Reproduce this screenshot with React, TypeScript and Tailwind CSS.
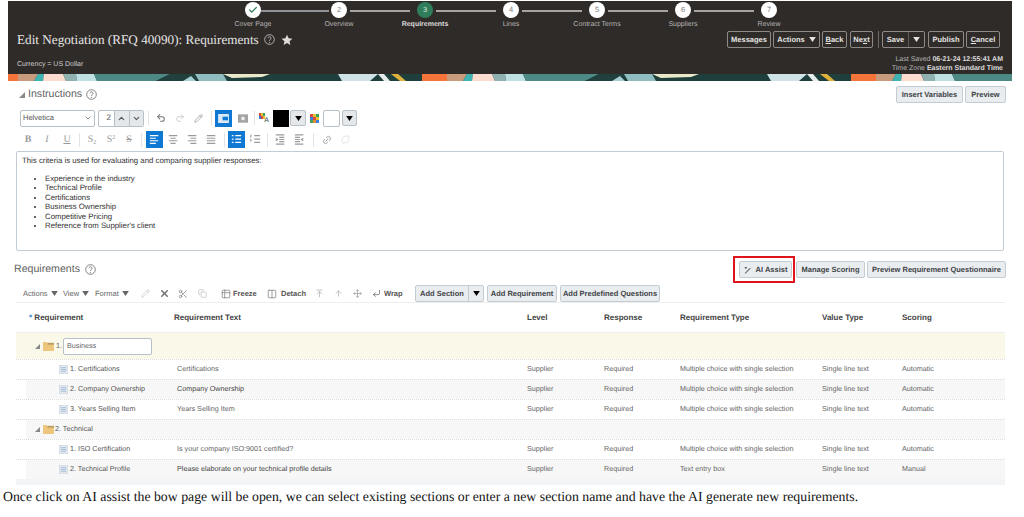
import { Check, ChevronUp, ChevronDown, Undo2, Redo2, Pencil, Link2, Unlink, X, Scissors, Copy, Table2, Columns2, ArrowUpToLine, ArrowUp, Move, CornerDownLeft } from 'lucide-react';

const steps = [
  { label: 'Cover Page', mark: 'check' },
  { label: 'Overview', mark: '2' },
  { label: 'Requirements', mark: '3', current: true },
  { label: 'Lines', mark: '4' },
  { label: 'Contract Terms', mark: '5' },
  { label: 'Suppliers', mark: '6' },
  { label: 'Review', mark: '7' },
];

const rows = [
  { name: '1. Certifications', text: 'Certifications', level: 'Supplier', response: 'Required', type: 'Multiple choice with single selection', value: 'Single line text', scoring: 'Automatic' },
  { name: '2. Company Ownership', text: 'Company Ownership', level: 'Supplier', response: 'Required', type: 'Multiple choice with single selection', value: 'Single line text', scoring: 'Automatic', alt: true },
  { name: '3. Years Selling Item', text: 'Years Selling Item', level: 'Supplier', response: 'Required', type: 'Multiple choice with single selection', value: 'Single line text', scoring: 'Automatic' },
  { section: '2. Technical', alt: true },
  { name: '1. ISO Certification', text: 'Is your company ISO:9001 certified?', level: 'Supplier', response: 'Required', type: 'Multiple choice with single selection', value: 'Single line text', scoring: 'Automatic' },
  { name: '2. Technical Profile', text: 'Please elaborate on your technical profile details', level: 'Supplier', response: 'Required', type: 'Text entry box', value: 'Single line text', scoring: 'Manual', alt: true },
];

const criteria = ['Experience in the industry', 'Technical Profile', 'Certifications', 'Business Ownership', 'Competitive Pricing', "Reference from Supplier's client"];

function Caret({ className = '' }: { className?: string }) {
  return (
    <svg viewBox="0 0 8 6" className={`w-[7px] h-[5px] shrink-0 ${className}`}>
      <path d="M0 0h8L4 6z" fill="currentColor" />
    </svg>
  );
}

function Help({ size = 11 }: { size?: number }) {
  return (
    <svg viewBox="0 0 16 16" width={size} height={size} className="shrink-0">
      <circle cx="8" cy="8" r="7" fill="none" stroke="currentColor" strokeWidth="1.2" />
      <path d="M5.800 6.200a2.200 2.200 0 1 1 3.400 1.900c-.8.500-1.200.9-1.200 1.900" fill="none" stroke="currentColor" strokeWidth="1.200" />
      <circle cx="8" cy="12" r=".9" fill="currentColor" />
    </svg>
  );
}

function Folder() {
  return (
    <svg viewBox="0 0 12 11" className="w-[11px] h-[10px] shrink-0">
      <path d="M0 1h4l1 1.500h7V11H0z" fill="#edc67c" />
      <path d="M5 2h7v2H5z" fill="#b99a63" />
    </svg>
  );
}

function DocIcon() {
  return (
    <svg viewBox="0 0 10 10" className="w-[9px] h-[9px] shrink-0">
      <rect width="10" height="10" fill="#e3e8ee" stroke="#bcc6d0" strokeWidth=".6" />
      <path d="M2 3h6M2 5h6M2 7h6" stroke="#8fb0d4" strokeWidth=".8" />
    </svg>
  );
}

function DarkButton({ children, className = '' }: { children: React.ReactNode; className?: string }) {
  return (
    <div className={`h-[17px] flex items-center justify-center whitespace-nowrap rounded-[2px] border border-[#8d8a87] text-[7.5px] font-bold text-[#e4e3e2] ${className}`}>
      {children}
    </div>
  );
}

function LightButton({ children, className = '' }: { children: React.ReactNode; className?: string }) {
  return (
    <div className={`h-[17px] flex items-center justify-center whitespace-nowrap rounded-[2px] border border-[#c4ccd3] bg-[#e9edf0] text-[7.5px] font-bold text-[#3f4347] ${className}`}>
      {children}
    </div>
  );
}

function ToolSquare({ active, children }: { active?: boolean; children?: React.ReactNode }) {
  return (
    <div className={`w-[17px] h-[17px] flex items-center justify-center shrink-0 ${active ? 'bg-[#0f78d2] text-white' : 'text-[#9a9a9a]'}`}>
      {children}
    </div>
  );
}

function Sep({ className = '' }: { className?: string }) {
  return <div className={`w-px h-[14px] bg-[#e3e3e3] shrink-0 ${className}`} />;
}

function Lines({ kind }: { kind: 'left' | 'center' | 'right' | 'full' | 'list' | 'num' | 'in' | 'out' }) {
  const d: Record<string, string> = {
    left: 'M1 2h10M1 5h7M1 8h10M1 11h7',
    center: 'M1 2h10M3 5h6M1 8h10M3 11h6',
    right: 'M1 2h10M4 5h7M1 8h10M4 11h7',
    full: 'M1 2h10M1 5h10M1 8h10M1 11h10',
    list: 'M1 2h2M5 2h7M1 6h2M5 6h7M1 10h2M5 10h7',
    num: 'M1 1v3M1 6v3M5 2h7M5 6h7M5 10h7',
    in: 'M1 1h10M1 12h10M5 4h6M5 6.500h6M5 9h6M1 5l2 1.500L1 8',
    out: 'M1 1h10M1 12h10M1 4h6M1 6.500h6M1 9h6M11 5L9 6.500l2 1.500',
  };
  return (
    <svg viewBox="0 0 13 13" className="w-[11px] h-[11px]">
      <path d={d[kind]} stroke="currentColor" strokeWidth="1.4" fill="none" />
    </svg>
  );
}

// one repeat of the artwork strip is 429px wide
function Banner() {
  const tile = (x: number) => (
    <g key={x} transform={`translate(${x} 0)`}>
      <rect width="429" height="7" fill="#1f3f3d" />
      <path d="M0 0h25v7H0z" fill="#f5743a" />
      <path d="M25 0h20l-4 7H25z" fill="#c99b7d" />
      <path d="M45 0h6l-1 7h-9z" fill="#3fb3b1" />
      <path d="M51 0h19l3 7H50z" fill="#fbdccf" />
      <path d="M70 0h13l1 7H73z" fill="#8fb2b1" />
      <path d="M83 0h18l3 7H84z" fill="#bfe0e3" />
      <path d="M101 0h76l-14 7h-59z" fill="#4d8a86" />
      <path d="M177 0h25l-6 7h-33z" fill="#213f3d" />
      <path d="M190 7l8-5 5 5z" fill="#a7d0d4" />
      <path d="M202 0h28l4 7h-28z" fill="#8fbcbf" />
      <path d="M230 0h47l-8 3-30 1z" fill="#e9e8c8" />
      <path d="M345 0h40l-8 7h-28z" fill="#cfe3e6" />
      <path d="M398 0h7l8 7h-6z" fill="#e0b13c" />
      <path d="M385 0h6l6 7h-6z" fill="#e7ecec" />
    </g>
  );
  return (
    <svg viewBox="0 0 1004 7" preserveAspectRatio="none" className="block w-full h-[7px]">
      {[-15, 414, 843].map(tile)}
    </svg>
  );
}

const cols = 'grid grid-cols-[10px_148px_353px_77px_76px_142px_80px_1fr] items-center';

export default function App() {
  return (
    <div className="w-[1024px] h-[517px] overflow-hidden bg-white opacity-[0.999] font-['Liberation_Sans',Arial,sans-serif] text-[#4a4a4a] antialiased [text-rendering:geometricPrecision]">
      <div className="pt-px pl-2 pr-3">
        <div className="h-[73px] bg-[#2f2b29] text-[#dcdbda]">
          <div className="flex pl-[202px] h-[30px]">
            {steps.map((s, i) => (
              <div key={s.label} className="relative w-[86px] h-[30px] flex flex-col items-center pt-px">
                {i < steps.length - 1 && (
                  <div className={`absolute top-[9px] h-[1.5px] ${i === 0 ? 'left-[51px] w-[68px] bg-[#8f9296]' : 'left-[54px] w-[60px] bg-[#a5a4a3]'}`} />
                )}
                <div className={`w-[16px] h-[16px] rounded-full flex items-center justify-center text-[7.5px] ${s.current ? 'bg-[#2f7d5b] text-[#cfe3d8]' : 'bg-white text-[#7a7a7a]'}`}>
                  {s.mark === 'check' ? <Check size={10} strokeWidth={3} className="text-[#2f7d5b]" /> : s.mark}
                </div>
                <div className={`mt-[2px] text-[7px] leading-[10px] whitespace-nowrap ${s.current ? 'font-bold text-[#dedddc]' : 'text-[#b5b4b3]'}`}>{s.label}</div>
              </div>
            ))}
          </div>
          <div className="flex items-center h-[17px] pl-[9px] pr-[12px]">
            <h1 className="font-['Liberation_Serif',serif] text-[13.2px] text-[#e6e5e4] whitespace-nowrap">Edit Negotiation (RFQ 40090): Requirements</h1>
            <div className="ml-[5px] text-[#c9c8c7]"><Help /></div>
            <svg viewBox="0 0 24 24" className="ml-[6px] w-[12px] h-[12px]"><path d="M12 1.500l3.200 7 7.600.8-5.700 5.100 1.600 7.500L12 18l-6.700 3.900 1.600-7.500L1.200 9.300l7.600-.8z" fill="#dcdbda" /></svg>
            <div className="ml-auto flex items-center">
              <DarkButton className="w-[44px]">Messages</DarkButton>
              <DarkButton className="w-[47px] ml-[2px] gap-[4px]">Actions <Caret /></DarkButton>
              <DarkButton className="w-[25px] ml-[2px]"><span><u>B</u>ack</span></DarkButton>
              <DarkButton className="w-[23px] ml-[3px]"><span>Ne<u>x</u>t</span></DarkButton>
              <div className="w-px h-[17px] bg-[#6d6a68] ml-[5px] mr-[3px]" />
              <DarkButton className="w-[43px]">
                <span className="flex-1 text-center">Save</span>
                <span className="h-full w-[16px] border-l border-[#5f5c5a] flex items-center justify-center"><Caret /></span>
              </DarkButton>
              <DarkButton className="w-[36px] ml-[3px]">Publish</DarkButton>
              <DarkButton className="w-[34px] ml-[2px]"><span><u>C</u>ancel</span></DarkButton>
            </div>
          </div>
          <div className="flex items-start justify-between pl-[9px] pr-[9px] mt-[7px]">
            <div className="text-[7px] leading-[10px] mt-[5px] text-[#cfcecd]">Currency = US Dollar</div>
            <div className="text-[7px] leading-[9px] text-right text-[#b5b4b3]">
              <div>Last Saved <b className="text-[#dedddc]">06-21-24 12:55:41 AM</b></div>
              <div>Time Zone <b className="text-[#dedddc]">Eastern Standard Time</b></div>
            </div>
          </div>
        </div>
        <Banner />
      </div>

      <div className="flex items-center h-[19px] mt-[4px] pl-[19px] pr-[18px]">
        <svg viewBox="0 0 6 6" className="w-[6px] h-[6px] text-[#8a8a8a]"><path d="M6 0v6H0z" fill="currentColor" /></svg>
        <h2 className="ml-[3px] text-[10.6px] text-[#5f5f5f]">Instructions</h2>
        <div className="ml-[4px] text-[#6b6b6b]"><Help /></div>
        <div className="ml-auto flex gap-[2px]">
          <LightButton className="w-[67px]">Insert Variables</LightButton>
          <LightButton className="w-[41px]">Preview</LightButton>
        </div>
      </div>

      <div className="flex items-center h-[18px] mt-[5px] pl-[20px] text-[#8a8a8a]">
        <div className="w-[75px] h-[17px] border border-[#b8c0c7] rounded-[2px] flex items-center justify-between px-[2px] text-[7.5px] text-[#555]">
          Helvetica <ChevronDown size={8} />
        </div>
        <div className="ml-[3px] h-[17px] w-[46px] flex items-center border border-[#b8c0c7] rounded-[2px] text-[8px] text-[#555]">
          <span className="w-[15px] text-right pr-[3px]">2</span>
          <span className="flex-1 h-full bg-[#e4e8eb] border-l border-[#b8c0c7] flex items-center justify-center"><ChevronUp size={9} strokeWidth={3} /></span>
          <span className="flex-1 h-full bg-[#e4e8eb] border-l border-[#b8c0c7] flex items-center justify-center"><ChevronDown size={9} strokeWidth={3} /></span>
        </div>
        <Sep className="ml-[4px]" />
        <div className="ml-[3px] flex gap-[2px]">
          <ToolSquare><Undo2 size={10} strokeWidth={2.5} className="text-[#777]" /></ToolSquare>
          <ToolSquare><Redo2 size={10} className="text-[#c5c5c5]" /></ToolSquare>
          <ToolSquare><Pencil size={9} /></ToolSquare>
        </div>
        <Sep className="ml-[4px]" />
        <div className="ml-[3px] flex gap-[2px]">
          <ToolSquare active>
            <svg viewBox="0 0 12 10" className="w-[11px] h-[9px]"><path d="M0 0h12v10H0z" fill="#dbe9f6" /><path d="M5 3h6v4H5z" fill="#0f78d2" /></svg>
          </ToolSquare>
          <ToolSquare>
            <svg viewBox="0 0 12 10" className="w-[10px] h-[9px]"><path d="M0 0h12v10H0z" fill="#a3a3a3" /><path d="M4 3h4v4H4z" fill="#eee" /></svg>
          </ToolSquare>
        </div>
        <Sep className="ml-[3px]" />
        <div className="ml-[4px] w-[10px] h-[11px] relative">
          <div className="grid grid-cols-3 w-[6px] h-[6px]">
            <span className="bg-[#d84a3a]" /><span className="bg-[#e8c23a]" /><span className="bg-[#3aa655]" />
            <span className="bg-[#3a7fd8]" /><span className="bg-[#d84a3a]" /><span className="bg-[#e8c23a]" />
          </div>
          <span className="absolute right-0 bottom-0 text-[7px] leading-[7px] font-bold text-[#6d7b7c]">A</span>
        </div>
        <div className="ml-[4px] w-[16px] h-[17px] bg-black" />
        <div className="w-[16px] h-[16px] ml-px border border-[#b8c0c7] bg-[#e4e8eb] rounded-[2px] flex items-center justify-center text-black"><Caret /></div>
        <div className="ml-[4px] w-[9px] h-[9px] grid grid-cols-3">
          <span className="bg-[#d84a3a]" /><span className="bg-[#e8c23a]" /><span className="bg-[#3aa655]" />
          <span className="bg-[#3a7fd8]" /><span className="bg-[#d84a3a]" /><span className="bg-[#e8c23a]" />
          <span className="bg-[#3aa655]" /><span className="bg-[#e8893a]" /><span className="bg-[#3a7fd8]" />
        </div>
        <div className="ml-[4px] w-[17px] h-[17px] bg-white border border-[#b8c0c7] rounded-[2px]" />
        <div className="w-[15px] h-[16px] ml-[2px] border border-[#b8c0c7] bg-[#e4e8eb] rounded-[2px] flex items-center justify-center text-black"><Caret /></div>
      </div>

      <div className="flex items-center h-[17px] mt-[4px] pl-[20px] text-[#9a9a9a]">
        <span className="w-[16px] text-center font-['Liberation_Serif',serif] font-bold text-[10px]">B</span>
        <span className="w-[22px] text-center font-['Liberation_Serif',serif] italic text-[10px]">I</span>
        <span className="w-[18px] text-center font-['Liberation_Serif',serif] underline text-[10px]">U</span>
        <Sep className="ml-[3px]" />
        <span className="ml-[2px] w-[20px] text-center font-['Liberation_Serif',serif] text-[10px]">S<sub className="text-[6px]">2</sub></span>
        <span className="w-[18px] text-center font-['Liberation_Serif',serif] text-[10px]">S<sup className="text-[6px]">2</sup></span>
        <span className="w-[18px] text-center font-['Liberation_Serif',serif] line-through text-[10px]">S</span>
        <Sep className="ml-[3px]" />
        <div className="ml-[4px] flex gap-[2px]">
          <ToolSquare active><Lines kind="left" /></ToolSquare>
          <ToolSquare><Lines kind="center" /></ToolSquare>
          <ToolSquare><Lines kind="right" /></ToolSquare>
          <ToolSquare><Lines kind="full" /></ToolSquare>
        </div>
        <Sep className="ml-[4px]" />
        <div className="ml-[3px] flex gap-[2px]">
          <ToolSquare active><Lines kind="list" /></ToolSquare>
          <ToolSquare><Lines kind="num" /></ToolSquare>
        </div>
        <Sep className="ml-[3px]" />
        <div className="ml-[4px] flex gap-[2px]">
          <ToolSquare><Lines kind="in" /></ToolSquare>
          <ToolSquare><Lines kind="out" /></ToolSquare>
        </div>
        <Sep className="ml-[5px]" />
        <div className="ml-[4px] flex gap-[2px]">
          <ToolSquare><Link2 size={10} className="-rotate-45" /></ToolSquare>
          <ToolSquare><Unlink size={9} className="text-[#d5d5d5]" /></ToolSquare>
        </div>
      </div>

      <div className="ml-[16px] mr-[20px] mt-[3px] h-[100px] border border-[#c4ccd3] rounded-[2px] px-[5px] pt-[4px] text-[7.8px] leading-[9.5px] text-[#333]">
        <p className="mb-[8px]">This criteria is used for evaluating and comparing supplier responses:</p>
        <ul className="pl-[23px] list-disc">
          {criteria.map(c => <li key={c}>{c}</li>)}
        </ul>
      </div>

      <div className="flex items-center h-[19px] mt-[9px] pl-[14px] pr-[18px]">
        <h2 className="text-[10.6px] text-[#5f5f5f]">Requirements</h2>
        <div className="ml-[5px] text-[#6b6b6b]"><Help /></div>
        <div className="ml-auto flex items-center gap-[2px]">
          <div className="relative mr-[2px]">
            <LightButton className="w-[53px] gap-[3px]">
              <svg viewBox="0 0 12 10" className="w-[9px] h-[8px] text-[#666]"><path d="M1 9l7-7 1 1-7 7zM9 1l2-1M1 1h3v2H1z" fill="currentColor" /></svg>
              AI Assist
            </LightButton>
            <div className="absolute -left-[6px] -top-[5px] w-[62px] h-[27px] border-[2px] border-[#e0141c]" />
          </div>
          <LightButton className="w-[69px]">Manage Scoring</LightButton>
          <LightButton className="w-[139px]">Preview Requirement Questionnaire</LightButton>
        </div>
      </div>

      <div className="flex items-center h-[17px] mt-[6px] pl-[23px] text-[7.5px] text-[#666]">
        <span className="flex items-center gap-[3px] w-[34px]">Actions <Caret /></span>
        <span className="flex items-center gap-[3px] ml-[6px] w-[26px]">View <Caret /></span>
        <span className="flex items-center gap-[3px] ml-[6px] w-[35px]">Format <Caret /></span>
        <Pencil size={9} className="ml-[11px] text-[#c8c8c8]" />
        <X size={11} strokeWidth={3.5} className="ml-[9px] text-[#777]" />
        <Scissors size={10} className="ml-[8px] text-[#8a8a8a]" />
        <Copy size={9} className="ml-[10px] text-[#c0c0c0]" />
        <Table2 size={10} className="ml-[14px] text-[#8a8a8a]" />
        <b className="ml-[2px] w-[24px] text-[#555]">Freeze</b>
        <Columns2 size={10} className="ml-[10px] text-[#8a8a8a]" />
        <b className="ml-[4px] w-[24px] text-[#555]">Detach</b>
        <ArrowUpToLine size={9} className="ml-[10px] text-[#b0b0b0]" />
        <ArrowUp size={9} className="ml-[10px] text-[#b0b0b0]" />
        <Move size={9} className="ml-[10px] text-[#a0a0a0]" />
        <CornerDownLeft size={9} className="ml-[10px] text-[#666]" />
        <b className="ml-[3px] w-[20px] text-[#555]">Wrap</b>
        <div className="ml-[11px] flex gap-[3px] items-center">
          <LightButton className="w-[69px]">
            <span className="flex-1 text-center">Add Section</span>
            <span className="h-full w-[15px] border-l border-[#c4ccd3] flex items-center justify-center text-black"><Caret /></span>
          </LightButton>
          <LightButton className="w-[70px]">Add Requirement</LightButton>
          <LightButton className="w-[100px]">Add Predefined Questions</LightButton>
        </div>
      </div>

      <div className="ml-[16px] mr-[19px] border-t border-[#eee] text-[7.2px]">
        <div className={`${cols} h-[29px] font-bold text-[8px] text-[#444]`}>
          <span />
          <span className="pl-[3px]"><span className="text-[#2a7fc9]">*</span> Requirement</span>
          <span>Requirement Text</span>
          <span>Level</span>
          <span>Response</span>
          <span>Requirement Type</span>
          <span>Value Type</span>
          <span>Scoring</span>
        </div>
        <div className="h-[27px] bg-[#faf8e8] border-t border-[#eee] flex items-center pl-[19px]">
          <svg viewBox="0 0 6 6" className="w-[5px] h-[5px] text-[#888]"><path d="M6 0v6H0z" fill="currentColor" /></svg>
          <span className="ml-[3px]"><Folder /></span>
          <span className="ml-[2px] text-[#666]">1.</span>
          <div className="ml-px w-[89px] h-[17px] border border-[#b8c0c7] rounded-[2px] bg-white flex items-center px-[3px] text-[#666]">Business</div>
        </div>
        {rows.map((r, i) => (
          <div key={i} className={`${cols} h-[20px] border-t border-dotted border-[#ddd] text-[#666] ${r.alt ? 'bg-[#f7f7f7]' : 'bg-white'}`}>
            {r.section ? (
              <>
                <span className="bg-white h-full" />
                <span className="col-span-7 flex items-center pl-[9px] text-[#555]">
                  <svg viewBox="0 0 6 6" className="w-[5px] h-[5px] text-[#888]"><path d="M6 0v6H0z" fill="currentColor" /></svg>
                  <span className="ml-[3px]"><Folder /></span>
                  <span className="ml-px">{r.section}</span>
                </span>
              </>
            ) : (
              <>
                <span className="bg-white h-full" />
                <span className="flex items-center pl-[33px] gap-[2px] text-[#555]"><DocIcon />{r.name}</span>
                <span className={`pl-[3px] ${r.alt ? 'text-[#444]' : ''}`}>{r.text}</span>
                <span>{r.level}</span>
                <span>{r.response}</span>
                <span>{r.type}</span>
                <span>{r.value}</span>
                <span>{r.scoring}</span>
              </>
            )}
          </div>
        ))}
        <div className="h-[6px] bg-[#f3f4f6]" />
      </div>

      <p className="mt-[3px] pl-[3px] font-['Liberation_Serif',serif] text-[13.8px] leading-[18px] text-[#111] whitespace-nowrap">Once click on AI assist the bow page will be open, we can select existing sections or enter a new section name and have the AI generate new requirements.</p>
    </div>
  );
}
